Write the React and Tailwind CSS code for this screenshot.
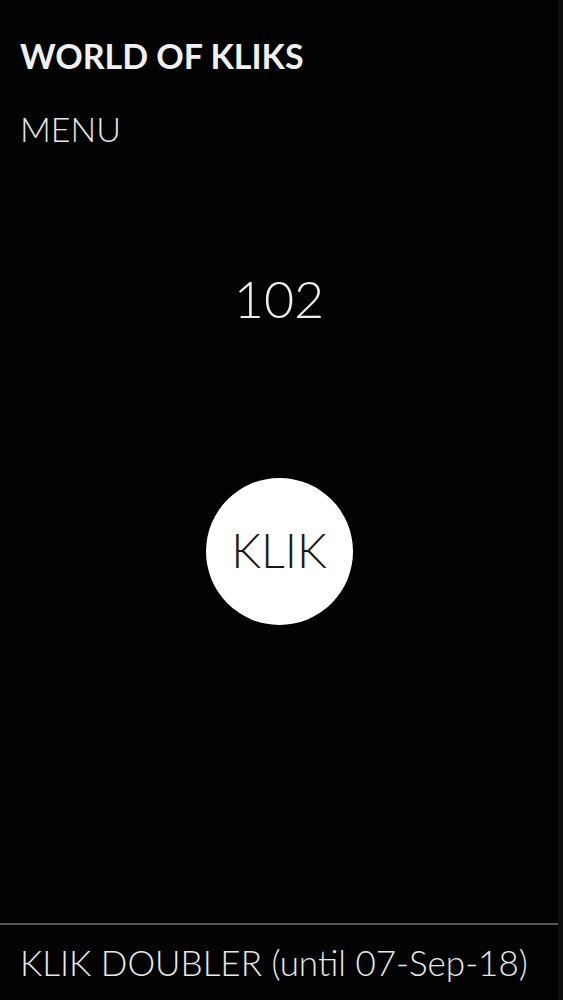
export default function App() {
  return (
    <div className="flex h-[1000px] w-full bg-[#030203] text-white" style={{ fontFamily: 'Lato, "Open Sans", sans-serif' }}>
      <div className="flex flex-1 flex-col">
        <div className="px-5 pt-[36px]">
          <div className="text-[34px] font-bold leading-[40px] text-[#f0f0f0]">WORLD OF KLIKS</div>
          <div className="mt-[33px] text-[34px] font-light leading-[40px] text-[#e8e8e8]">MENU</div>
        </div>
        <div className="mt-[119px] text-center text-[52px] font-light leading-[60px] text-[#eeeeee]">102</div>
        <div className="mt-[150px] flex justify-center">
          <div className="flex h-[147px] w-[147px] items-center justify-center rounded-full bg-white pb-[2px] text-[47px] font-light text-[#1a1a1a]">
            KLIK
          </div>
        </div>
        <div className="flex-1" />
        <div className="h-[2px] bg-[#555555]" />
        <div className="h-[75px] px-5 pt-[17px] text-[35px] font-light leading-[40px] text-[#e8e8e8]">
          KLIK DOUBLER (until 07-Sep-18)
        </div>
      </div>
      <div className="w-[5px] bg-[#0f0d10]" />
    </div>
  );
}
